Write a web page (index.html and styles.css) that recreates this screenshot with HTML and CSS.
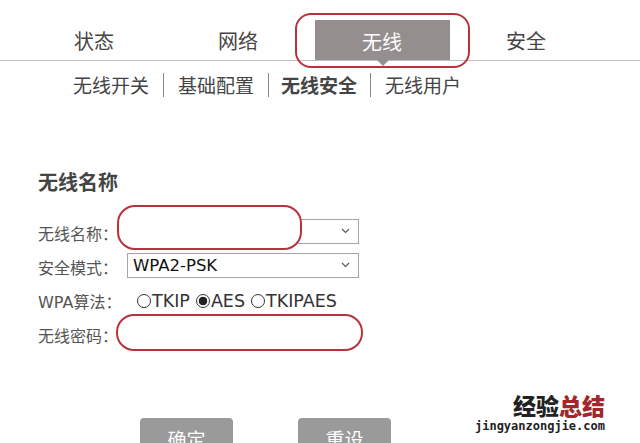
FILE: index.html
```html
<!DOCTYPE html>
<html lang="zh-CN">
<head>
  <meta charset="UTF-8">
  <meta name="viewport" content="width=device-width, initial-scale=1.0">
  <title>无线安全</title>
  <link rel="stylesheet" href="styles.css">
</head>
<body>
  <div class="nav">
    <div class="tab">状态</div>
    <div class="tab">网络</div>
    <div class="tab active">
      <span class="tabBox">无线</span>
      <span class="mark markTab"></span>
    </div>
    <div class="tab">安全</div>
  </div>

  <div class="subNav">
    <span class="subItem">无线开关</span>
    <span class="subItem">基础配置</span>
    <span class="subItem current">无线安全</span>
    <span class="subItem">无线用户</span>
  </div>

  <div class="form">
    <h2 class="title">无线名称</h2>

    <div class="row">
      <span class="label">无线名称：</span>
      <div class="field">
        <div class="select">
          <span></span>
          <svg class="chev" width="9" height="6" viewBox="0 0 9 6"><path d="M1 1l3.5 3.5L8 1" fill="none" stroke="#555" stroke-width="1.1"/></svg>
        </div>
        <span class="mark markName"></span>
      </div>
    </div>

    <div class="row">
      <span class="label">安全模式：</span>
      <div class="field">
        <div class="select">
          <span class="selText">WPA2-PSK</span>
          <svg class="chev" width="9" height="6" viewBox="0 0 9 6"><path d="M1 1l3.5 3.5L8 1" fill="none" stroke="#555" stroke-width="1.1"/></svg>
        </div>
      </div>
    </div>

    <div class="row">
      <span class="label">WPA算法：</span>
      <div class="radios">
        <label class="opt"><input type="radio" name="algo" class="radio">TKIP</label>
        <label class="opt"><input type="radio" name="algo" class="radio" checked>AES</label>
        <label class="opt"><input type="radio" name="algo" class="radio">TKIPAES</label>
      </div>
    </div>

    <div class="row">
      <span class="label">无线密码：</span>
      <div class="field">
        <div class="input"></div>
        <span class="mark markPass"></span>
      </div>
    </div>

    <div class="buttons">
      <button class="btn">确定</button>
      <button class="btn">重设</button>
    </div>
  </div>

  <div class="stamp">
    <div class="stampCn">经验<span class="red">总结</span></div>
    <div class="stampUrl">jingyanzongjie.com</div>
  </div>
</body>
</html>
```

FILE: styles.css
```css
* {
  box-sizing: border-box;
}

html, body {
  height: 443px;
  overflow: hidden;
}

body {
  margin: 0;
  background: #fff;
  color: #444;
  font-family: "DejaVu Sans", "Noto Sans CJK SC", sans-serif;
  position: relative;
}

/* top tabs */
.nav {
  display: flex;
  height: 61px;
  padding-left: 22px;
  border-bottom: 1px solid #c2c2c2;
}
.tab {
  width: 144px;
  display: flex;
  justify-content: center;
  align-items: flex-end;
  padding-bottom: 5px;
  font-family: "Noto Sans CJK SC", sans-serif;
  font-size: 20px;
  color: #444;
}
.tab.active {
  position: relative;
  padding-bottom: 0;
}
.tabBox {
  position: relative;
  width: 135px;
  height: 40px;
  line-height: 43px;
  text-align: center;
  background: #948e8e;
  color: #fff;
}
.tabBox::after {
  content: "";
  position: absolute;
  left: 62px;
  top: 100%;
  border-top: 6px solid #948e8e;
  border-left: 6px solid transparent;
  border-right: 6px solid transparent;
}

.mark {
  position: absolute;
  border: 2px solid #b8333b;
  border-radius: 18px;
}
.markTab {
  left: -15px;
  top: 13px;
  width: 175px;
  height: 55px;
  border-radius: 16px;
}

/* sub tabs */
.subNav {
  display: flex;
  padding: 12px 0 0 73px;
  font-family: "Noto Sans CJK SC", sans-serif;
  font-size: 19px;
  color: #444;
}
.subItem {
  line-height: 24px;
  padding: 0 14px;
  border-left: 1px solid #888;
}
.subItem:first-child {
  padding-left: 0;
  border-left: none;
}
.subItem.current {
  font-weight: bold;
  padding-left: 12px;
  padding-right: 13px;
}

/* form */
.form {
  padding-left: 38px;
}
.title {
  margin: 71px 0 20px;
  font-family: "Noto Sans CJK SC", sans-serif;
  font-size: 20px;
  line-height: 28px;
  font-weight: bold;
  color: #444;
}
.row {
  display: flex;
  align-items: center;
  height: 34px;
}
.label {
  width: 89px;
  font-family: "DejaVu Sans", "Noto Sans CJK SC", sans-serif;
  font-size: 16px;
  color: #555;
  white-space: nowrap;
}
.field {
  position: relative;
  margin-top: -4px;
}
.select {
  width: 232px;
  height: 25px;
  border: 1px solid #a6a6a6;
  display: flex;
  align-items: center;
  justify-content: space-between;
  padding: 0 8px 0 5px;
  background: #fff;
}
.selText {
  font-size: 16.5px;
  color: #111;
}
.input {
  width: 232px;
  height: 25px;
  border: 1px solid #ddd;
}
.markName {
  left: -10px;
  top: -14px;
  width: 185px;
  height: 45px;
  background: #fff;
}
.markPass {
  left: -11px;
  top: -7px;
  width: 247px;
  height: 37px;
  background: #fff;
}

.radios {
  display: flex;
  margin-left: 10px;
  font-size: 17.5px;
  color: #333;
}
.opt {
  display: flex;
  align-items: center;
  margin-right: 6px;
}
.radio {
  appearance: none;
  -webkit-appearance: none;
  width: 14px;
  height: 14px;
  margin: 0 1px 0 0;
  border: 1px solid #333;
  border-radius: 50%;
  background: #fff;
}
.radio:checked {
  background: radial-gradient(circle, #222 0, #222 4px, #fff 4.6px);
}

.buttons {
  display: flex;
  gap: 65px;
  margin-top: 66px;
  padding-left: 102px;
}
.btn {
  width: 93px;
  height: 40px;
  border: none;
  border-radius: 4px;
  background: #9a9a9a;
  color: #fff;
  font-family: "Noto Sans CJK SC", sans-serif;
  font-size: 19px;
  line-height: 42px;
  padding: 0;
}

/* watermark */
.stamp {
  position: absolute;
  top: 392px;
  right: 35px;
  text-align: right;
}
.stampCn {
  font-family: "Noto Sans CJK SC", sans-serif;
  font-size: 23px;
  font-weight: 900;
  line-height: 26px;
  color: #222;
}
.red {
  color: #a3262b;
}
.stampUrl {
  font-family: "DejaVu Sans Mono", monospace;
  font-size: 12px;
  font-weight: bold;
  color: #222;
  line-height: 16px;
}
```
